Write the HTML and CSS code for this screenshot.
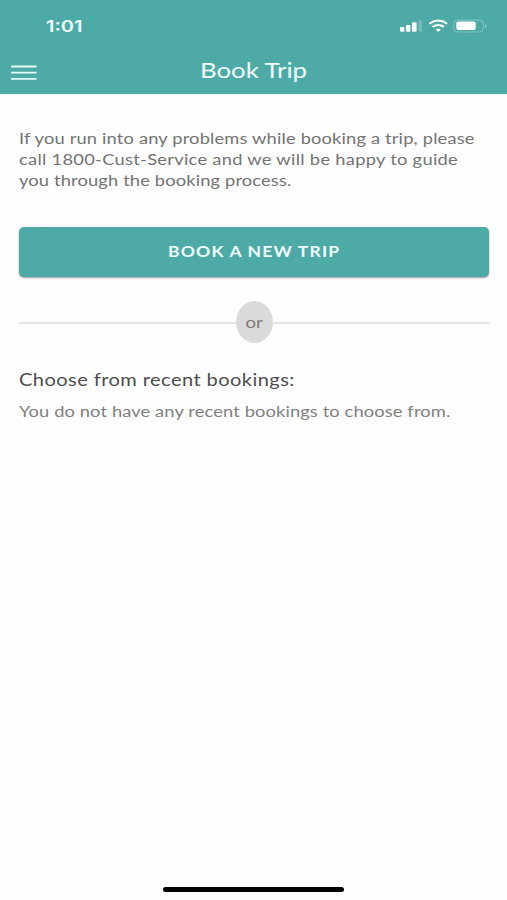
FILE: index.html
```html
<!DOCTYPE html>
<html lang="en">
<head>
<meta charset="utf-8">
<title>Book Trip</title>
<link rel="stylesheet" href="styles.css">
</head>
<body>
<div class="screen">
  <header class="header">
    <div class="status">
      <span class="time">1:01</span>
      <svg class="indicators" width="90" height="20" viewBox="0 0 90 20">
        <g fill="#fff">
          <rect x="0" y="11" width="4.4" height="4.7" rx="1"/>
          <rect x="6" y="9" width="4.4" height="6.7" rx="1"/>
          <rect x="12" y="6.3" width="4.6" height="9.4" rx="1"/>
          <rect x="18.4" y="4" width="3.8" height="11.7" rx="1" opacity=".22"/>
          <path d="M38.3 15.7l-2.6-2q2.6-1.7 5.2 0z"/>
          <rect x="56.3" y="5.6" width="19.4" height="8.4" rx="2"/>
          <path d="M85 8v4q1.5-.6 1.5-2t-1.5-2z" opacity=".4"/>
        </g>
        <g fill="none" stroke="#fff">
          <path d="M29.4 7.7q8.9-6.2 17.8 0M32.6 10.9q5.7-4 11.4 0" stroke-width="2"/>
          <rect x="53.7" y="4" width="29.6" height="12" rx="4" opacity=".3"/>
        </g>
      </svg>
    </div>
    <div class="navbar">
      <svg class="menu" width="26" height="18" viewBox="0 0 26 18"><path d="M0 2.5h25.5M0 8.7h25.5M0 14.9h25.5" stroke="#e4fbf8" stroke-width="1.8"/></svg>
      <h1 class="title">Book Trip</h1>
    </div>
  </header>
  <main class="content">
    <p class="intro">
      <span class="line l1">If you run into any problems while booking a trip, please</span>
      <span class="line l2">call 1800-Cust-Service and we will be happy to guide</span>
      <span class="line l3">you through the booking process.</span>
    </p>
    <button class="primary"><span class="label">BOOK A NEW TRIP</span></button>
    <div class="divider"><span class="or"><span class="or-text">or</span></span></div>
    <h2 class="recent">Choose from recent bookings:</h2>
    <p class="empty">You do not have any recent bookings to choose from.</p>
  </main>
  <div class="home"></div>
</div>
</body>
</html>
```
FILE: styles.css
```css
* { box-sizing: border-box; margin: 0; padding: 0; }
body { background: #fff; font-family: Lato, sans-serif; }
.screen { width: 507px; height: 900px; display: flex; flex-direction: column; background: #fefefe; overflow: hidden; }
.header { height: 93.5px; background: #4daaa6; color: #f2ffff; }
.status { height: 50px; padding: 16px 13px 0 46px; display: flex; justify-content: space-between; align-items: flex-start; }
.time { font: 600 16px/20px Inter, sans-serif; transform: scaleX(1.25); transform-origin: left; }
.indicators { display: block; margin-right: 4px; }
.navbar { height: 40px; padding-left: 11px; display: grid; grid-template-columns: 26px 1fr 37px; align-items: center; }
.menu { margin-top: 5px; }
.title { font-size: 21.5px; line-height: 40px; font-weight: 400; text-align: center; transform: scaleX(1.2); }
.content { flex: 1; padding: 34.5px 18px 0 19px; display: flex; flex-direction: column; color: #737373; }
.intro { height: 63px; }
.line, .recent, .empty { display: block; width: max-content; white-space: nowrap; transform: scaleX(1.18); transform-origin: left; }
.line { font-size: 15.5px; line-height: 21px; }
.l1 { letter-spacing: .135px; }
.l2 { letter-spacing: .24px; }
.l3 { letter-spacing: .12px; }
.primary { margin-top: 36px; height: 50px; border: 0; border-radius: 5px; background: #4daaa6; box-shadow: 0 1px 2px #0006; color: #f0ffff; font-family: inherit; }
.label { display: inline-block; font-size: 14.5px; line-height: 20px; font-weight: 700; letter-spacing: .95px; transform: scaleX(1.21); }
.divider { margin-top: 24px; height: 42px; display: flex; align-items: center; }
.divider::before, .divider::after { content: ""; flex: 1; height: 2px; margin-top: 1px; background: #e3e3e3; }
.or { width: 37px; height: 42px; border-radius: 50%; background: #dadada; display: flex; align-items: center; justify-content: center; }
.or-text { font-size: 15.5px; transform: scaleX(1.2); color: #7b7b7b; }
.recent { margin-top: 24px; font-size: 17px; line-height: 26px; font-weight: 400; letter-spacing: .36px; color: #4d4d4d; }
.empty { margin-top: 8px; font-size: 15.5px; line-height: 21px; letter-spacing: .1px; color: #808080; }
.home { width: 181px; height: 5px; margin: 0 auto 8px 163px; border-radius: 3px; background: #000; }
```
